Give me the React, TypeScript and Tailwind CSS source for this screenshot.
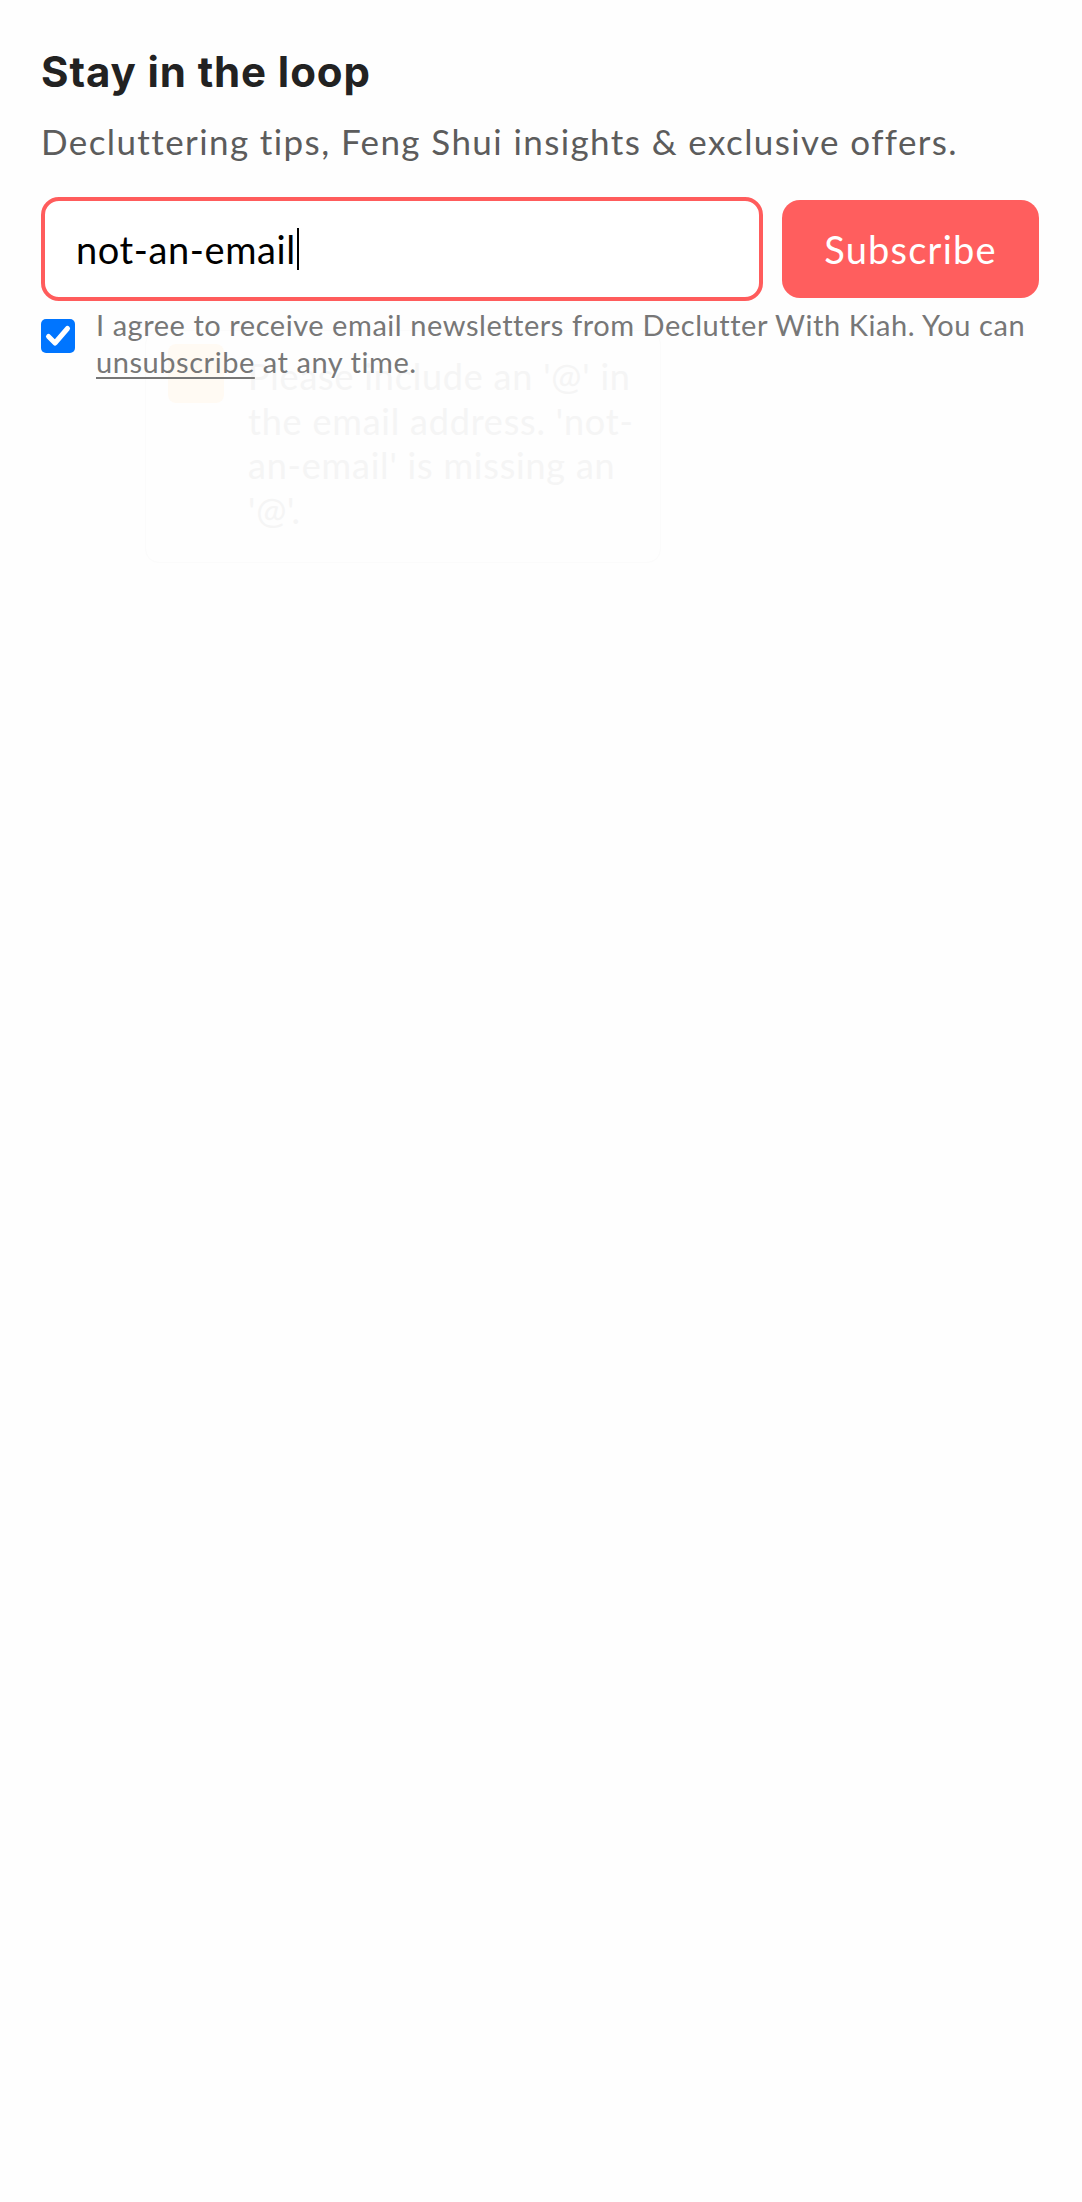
import React from "react";

export default function App() {
  return (
    <div
      className="relative min-h-screen w-full bg-[#fefefe] pl-[41px] pr-[43px] pt-[51px]"
      style={{ fontFamily: "Lato, 'Open Sans', sans-serif" }}
    >
      <div className="absolute left-[145px] top-[330px] flex h-[233px] w-[516px] items-start gap-[24px] rounded-[14px] border border-[#fbfbfb] pl-[22px] pt-[13px]">
        <div className="h-[59px] w-[56px] shrink-0 rounded-[8px] bg-[#fffaf3]" />
        <div className="pt-[10px] text-[36px] leading-[44.5px] tracking-[0.8px] text-[#f5f5f5]">
          <div>Please include an '@' in</div>
          <div>the email address. 'not-</div>
          <div>an-email' is missing an</div>
          <div>'@'.</div>
        </div>
      </div>

      <h2
        className="relative text-[42px] leading-[42px] font-bold text-[#222222] tracking-[0.9px]"
        style={{ fontFamily: "Inter, 'Noto Sans', sans-serif" }}
      >
        Stay in the loop
      </h2>
      <p className="relative mt-[27px] text-[35px] leading-[42px] tracking-[1.4px] text-[#5c5c5c]">
        Decluttering tips, Feng Shui insights &amp; exclusive offers.
      </p>

      <form
        className="relative mt-[35px] flex items-center gap-[19px]"
        onSubmit={(e) => e.preventDefault()}
      >
        <div className="flex h-[104px] flex-1 items-center rounded-[18px] border-4 border-[#ff5c5c] bg-white pl-[31px]">
          <span className="text-[38px] tracking-[0.6px] text-black">not-an-email</span>
          <span className="ml-[1px] inline-block h-[42px] w-[2px] bg-black" />
        </div>
        <button
          type="submit"
          className="flex h-[98px] w-[257px] items-center justify-center rounded-[18px] bg-[#ff5e5e] text-[38px] tracking-[1.2px] text-white"
        >
          Subscribe
        </button>
      </form>

      <div className="relative mt-[5px] flex items-start gap-[21px]">
        <div className="mt-[13px] flex h-[34px] w-[34px] shrink-0 items-center justify-center rounded-[5px] bg-[#0075ff]">
          <svg width="34" height="34" viewBox="0 0 34 34" fill="none">
            <path
              d="M7.5 17.5L14 24L26.5 9.5"
              stroke="white"
              strokeWidth="5"
              strokeLinecap="round"
              strokeLinejoin="round"
            />
          </svg>
        </div>
        <p className="text-[29px] leading-[37px] tracking-[0.55px] text-[#777777]">
          I agree to receive email newsletters from Declutter With Kiah. You can
          <br />
          <span className="underline decoration-[2px] underline-offset-[4px]">unsubscribe</span> at any time.
        </p>
      </div>
    </div>
  );
}
